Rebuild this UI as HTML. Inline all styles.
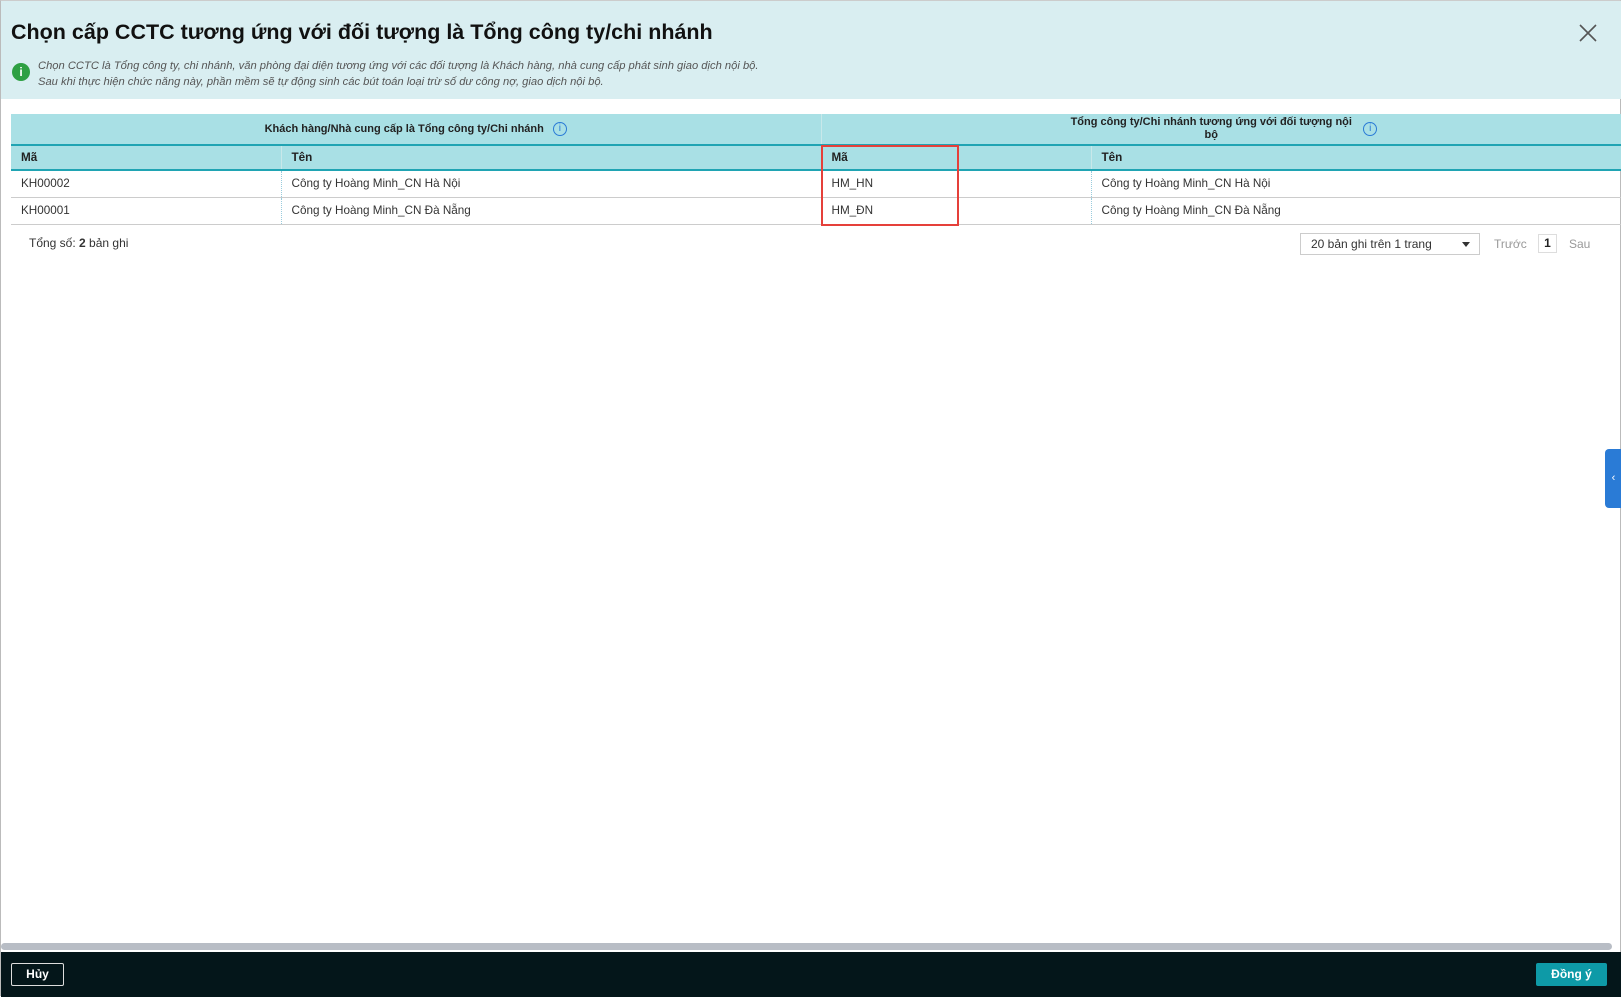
<!DOCTYPE html>
<html><head><meta charset="utf-8"><style>
*{box-sizing:border-box;margin:0;padding:0}
body{width:1621px;height:996px;overflow:hidden;background:#fff;font-family:"Liberation Sans","DejaVu Sans",sans-serif;color:#222;position:relative;border-left:1px solid #bbb;border-right:1px solid #bbb;border-top:1px solid #ccc}
.hdr{position:absolute;left:0;top:0;width:1620px;height:98px;background:#d9eef1}
.title{position:absolute;left:10px;top:19px;font-size:21.5px;font-weight:bold;color:#111}
.ic{position:absolute;left:11px;top:62px;width:18px;height:18px;border-radius:50%;background:#2ea043;color:#fff;font-weight:bold;font-size:12px;text-align:center;line-height:18px}
.note{position:absolute;left:37px;top:57px;font-size:11.2px;font-style:italic;color:#555;line-height:16px}
.x{position:absolute;left:1577px;top:22px;width:20px;height:20px}
table{position:absolute;left:10px;top:113px;width:1610px;border-collapse:collapse;font-size:11.7px}
th{background:#a9e0e5;font-weight:bold;color:#222;text-align:left;padding:0 10px}
tr.g th{height:31px;text-align:center;font-size:11px;border-bottom:2px solid #20a4b3}
tr.g th+th{border-left:1px solid #c8e8ea}
tr.c th{height:25px;border-bottom:2px solid #20a4b3}
tr.c th+th{border-left:1px solid #c8e8ea}
td{height:27px;padding:0 10px;border-bottom:1px solid #ccc;color:#333}
td+td{border-left:1px dotted #9cd}
.ii{display:inline-block;width:14px;height:14px;border:1.2px solid #2a7bd6;border-radius:50%;color:#2a7bd6;font-size:10px;line-height:12px;text-align:center;font-weight:normal;vertical-align:middle;margin-left:6px}
.red{position:absolute;left:820px;top:144px;width:138px;height:81px;border:2.5px solid #e5403a}
.tot{position:absolute;left:28px;top:235px;font-size:12px;color:#333}
.dd{position:absolute;left:1299px;top:232px;width:180px;height:22px;border:1px solid #ccc;font-size:12px;padding:3px 10px;color:#333}
.dd:after{content:"";position:absolute;right:9px;top:8px;border:4px solid transparent;border-top:5px solid #333}
.pg{position:absolute;top:236px;font-size:12px;color:#999}
.one{position:absolute;left:1537px;top:233px;width:19px;height:19px;border:1px solid #ddd;font-size:12px;text-align:center;line-height:17px;font-weight:bold;color:#222}
.tab{position:absolute;left:1604px;top:448px;width:17px;height:59px;background:#2a7bd6;border-radius:4px 0 0 4px;color:#fff;font-size:11px;text-align:center;line-height:59px}
.sb{position:absolute;left:0;top:942px;width:1611px;height:7px;background:#b8bdc5;border-radius:4px}
.ft{position:absolute;left:0;top:951px;width:1621px;height:45px;background:#04161a}
.b1{position:absolute;left:10px;top:962px;width:53px;height:23px;border:1px solid #ddd;border-radius:2px;color:#fff;font-weight:bold;font-size:12px;text-align:center;line-height:21px}
.b2{position:absolute;left:1535px;top:962px;width:71px;height:23px;background:#0e9aa7;border-radius:2px;color:#fff;font-weight:bold;font-size:12px;text-align:center;line-height:23px}
</style></head><body>
<div class="hdr"></div>
<div class="title">Chọn cấp CCTC tương ứng với đối tượng là Tổng công ty/chi nhánh</div>
<div class="ic">i</div>
<div class="note">Chọn CCTC là Tổng công ty, chi nhánh, văn phòng đại diện tương ứng với các đối tượng là Khách hàng, nhà cung cấp phát sinh giao dịch nội bộ.<br>Sau khi thực hiện chức năng này, phần mềm sẽ tự động sinh các bút toán loại trừ số dư công nợ, giao dịch nội bộ.</div>
<svg class="x" viewBox="0 0 20 20"><path d="M2 2L18 18M18 2L2 18" stroke="#555" stroke-width="1.6"/></svg>
<table>
<colgroup><col style="width:270px"><col style="width:540px"><col style="width:270px"><col></colgroup>
<tr class="g"><th colspan="2">Khách hàng/Nhà cung cấp là Tổng công ty/Chi nhánh <span class="ii">i</span></th><th colspan="2"><span style="display:inline-block;width:292px;vertical-align:middle;line-height:13px">Tổng công ty/Chi nhánh tương ứng với đối tượng nội bộ</span><span class="ii">i</span></th></tr>
<tr class="c"><th>Mã</th><th>Tên</th><th>Mã</th><th>Tên</th></tr>
<tr><td>KH00002</td><td>Công ty Hoàng Minh_CN Hà Nội</td><td>HM_HN</td><td>Công ty Hoàng Minh_CN Hà Nội</td></tr>
<tr><td>KH00001</td><td>Công ty Hoàng Minh_CN Đà Nẵng</td><td>HM_ĐN</td><td>Công ty Hoàng Minh_CN Đà Nẵng</td></tr>
</table>
<div class="red"></div>
<div class="tot">Tổng số: <b>2</b> bản ghi</div>
<div class="dd">20 bản ghi trên 1 trang</div>
<div class="pg" style="left:1493px">Trước</div>
<div class="one">1</div>
<div class="pg" style="left:1568px">Sau</div>
<div class="tab">‹</div>
<div class="sb"></div>
<div class="ft"></div>
<div class="b1">Hủy</div>
<div class="b2">Đồng ý</div>
</body></html>
